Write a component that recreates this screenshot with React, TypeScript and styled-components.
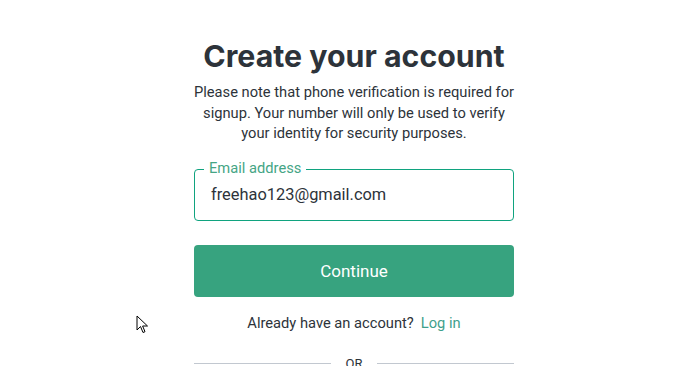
import React from "react";
import styled, { createGlobalStyle } from "styled-components";

const Global = createGlobalStyle`
  html, body { margin: 0; padding: 0; background: #fff; }
  body { font-family: Roboto, "Liberation Sans", sans-serif; color: #2d333a; }
  * { box-sizing: border-box; }
`;

const Page = styled.main`
  position: relative;
  width: 680px;
  height: 366px;
  overflow: hidden;
  display: flex;
  justify-content: center;
  padding-left: 28px;
`;

const Column = styled.section`
  width: 320px;
  flex: none;
  padding-top: 36px;
  display: flex;
  flex-direction: column;
`;

const Title = styled.h1`
  margin: 0;
  font-family: Inter, Roboto, sans-serif;
  font-weight: 700;
  font-size: 30.3px;
  line-height: 40px;
  text-align: center;
  color: #2d333a;
`;

const Lead = styled.p`
  margin: 6px -8px 0;
  font-size: 14.7px;
  line-height: 20.5px;
  text-align: center;
  color: #2d333a;
`;

const Field = styled.div`
  position: relative;
  margin-top: 25px;
  height: 52px;
  flex: none;
  border: 1px solid #10a37f;
  border-radius: 4px;
  display: flex;
  align-items: center;
  padding: 0 16px;
`;

const FieldLabel = styled.span`
  position: absolute;
  left: 9px;
  top: -11px;
  padding: 0 5px;
  background: #fff;
  font-size: 14.7px;
  line-height: 18px;
  color: #45a585;
`;

const FieldValue = styled.span`
  font-size: 16.4px;
  color: #2d333a;
`;

const PrimaryButton = styled.button`
  margin-top: 24px;
  height: 52px;
  flex: none;
  border: none;
  border-radius: 4px;
  background: #37a37f;
  color: #fff;
  font-family: Roboto, sans-serif;
  font-size: 17px;
  cursor: pointer;
`;

const Alt = styled.p`
  margin: 16px 0 0;
  font-size: 14.7px;
  line-height: 20px;
  text-align: center;
  color: #2d333a;
`;

const Link = styled.a`
  color: #3f9f8c;
  text-decoration: none;
  margin-left: 7px;
`;

const Divider = styled.div`
  margin-top: 23px;
  display: flex;
  align-items: center;
  gap: 15px;
  font-size: 13px;
  color: #2d333a;
  &::before, &::after {
    content: "";
    flex: 1;
    height: 1px;
    background: #c2c8d0;
  }
`;

const Cursor = styled.svg`
  position: absolute;
  left: 136px;
  top: 315px;
`;

export default function App() {
  return (
    <Page>
      <Global />
      <Column>
        <Title>Create your account</Title>
        <Lead>
          Please note that phone verification is required for
          <br />
          signup. Your number will only be used to verify
          <br />
          your identity for security purposes.
        </Lead>
        <Field>
          <FieldLabel>Email address</FieldLabel>
          <FieldValue>freehao123@gmail.com</FieldValue>
        </Field>
        <PrimaryButton>Continue</PrimaryButton>
        <Alt>
          Already have an account?<Link href="#">Log in</Link>
        </Alt>
        <Divider>OR</Divider>
      </Column>
      <Cursor width="14" height="20" viewBox="0 0 14 20">
        <path d="M1 1 L1 15 L4.5 11.5 L7 17.5 L9 16.7 L6.6 11 L11.5 11 Z" fill="#fff" stroke="#000" strokeWidth="1" strokeLinejoin="miter" />
      </Cursor>
    </Page>
  );
}
